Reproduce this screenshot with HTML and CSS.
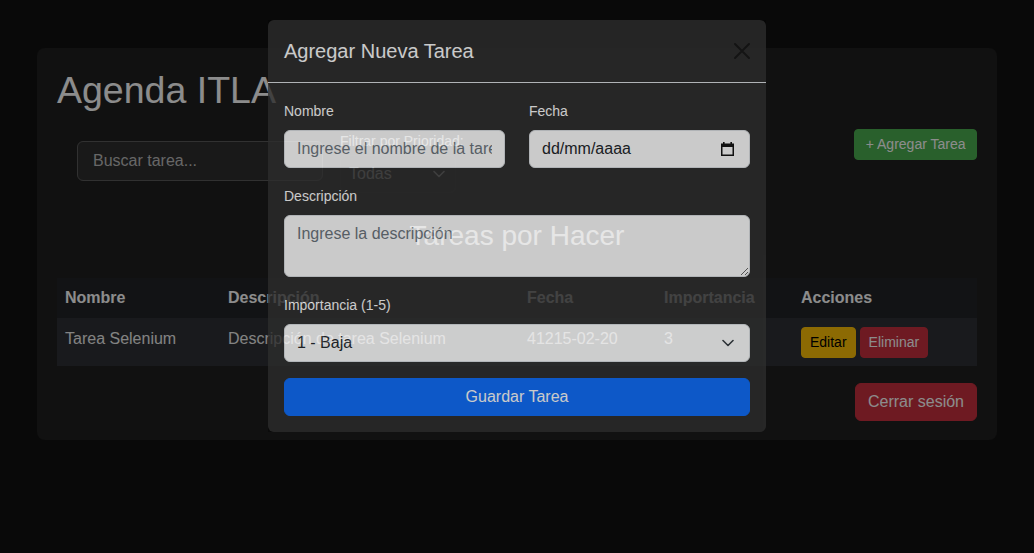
FILE: index.html
```html
<!DOCTYPE html>
<html lang="es">
<head>
<meta charset="utf-8">
<title>Agenda ITLA</title>
<link rel="stylesheet" href="styles.css">
</head>
<body>
  <main class="card">
    <h1 class="title">Agenda ITLA</h1>
    <div class="toolbar">
      <input class="search" type="text" placeholder="Buscar tarea...">
      <div class="filter">
        <label class="filter-label">Filtrar por Prioridad:</label>
        <div class="filter-select">
          <span>Todas</span>
          <svg class="filter-chev" width="12" height="8" viewBox="0 0 12 8"><path d="M1 1.5l5 5 5-5" fill="none" stroke="#dddddd" stroke-width="1.5" stroke-linecap="round" stroke-linejoin="round"/></svg>
        </div>
      </div>
      <button class="btn btn-sm btn-success add-btn">+ Agregar Tarea</button>
    </div>
    <h2 class="section-title">Tareas por Hacer</h2>
    <table class="tasks">
      <colgroup>
        <col class="c-name"><col class="c-desc"><col class="c-date"><col class="c-imp"><col class="c-act">
      </colgroup>
      <thead>
        <tr><th>Nombre</th><th>Descripción</th><th>Fecha</th><th>Importancia</th><th>Acciones</th></tr>
      </thead>
      <tbody>
        <tr>
          <td>Tarea Selenium</td>
          <td>Descripción de tarea Selenium</td>
          <td>41215-02-20</td>
          <td>3</td>
          <td class="actions"><div class="action-group"><button class="btn btn-sm btn-warning">Editar</button><button class="btn btn-sm btn-danger">Eliminar</button></div></td>
        </tr>
      </tbody>
    </table>
    <div class="logout-row"><button class="btn btn-danger">Cerrar sesión</button></div>
  </main>

  <div class="backdrop"></div>

  <div class="modal">
    <div class="modal-header">
      <h5 class="modal-title">Agregar Nueva Tarea</h5>
      <button class="btn-close" aria-label="Cerrar">
        <svg width="16" height="16" viewBox="0 0 16 16"><path d="M1 1L15 15M15 1L1 15" stroke="#000" stroke-width="2" stroke-linecap="round"/></svg>
      </button>
    </div>
    <div class="modal-body">
      <div class="form-row">
        <div class="field">
          <label class="form-label">Nombre</label>
          <input class="form-control" type="text" placeholder="Ingrese el nombre de la tarea">
        </div>
        <div class="field">
          <label class="form-label">Fecha</label>
          <div class="form-control date-control">
            <span>dd/mm/aaaa</span>
            <svg width="15" height="14" viewBox="0 0 15 14"><rect x="3" y="0" width="1.6" height="2.5" fill="#111"/><rect x="10.4" y="0" width="1.6" height="2.5" fill="#111"/><rect x="1.75" y="2.25" width="11.5" height="11" fill="none" stroke="#111" stroke-width="1.5"/><rect x="1" y="2" width="13" height="3" fill="#111"/></svg>
          </div>
        </div>
      </div>
      <div class="field mb">
        <label class="form-label">Descripción</label>
        <textarea class="form-control" rows="2" placeholder="Ingrese la descripción"></textarea>
      </div>
      <div class="field mb">
        <label class="form-label">Importancia (1-5)</label>
        <div class="select-wrap">
          <select class="form-control form-select">
            <option>1 - Baja</option>
            <option>2</option>
            <option>3</option>
            <option>4</option>
            <option>5 - Alta</option>
          </select>
          <svg class="select-chev" width="12" height="8" viewBox="0 0 12 8"><path d="M1 1.5l5 5 5-5" fill="none" stroke="#343a40" stroke-width="1.6" stroke-linecap="round" stroke-linejoin="round"/></svg>
        </div>
      </div>
      <button class="btn btn-primary btn-block">Guardar Tarea</button>
    </div>
  </div>
</body>
</html>
```

FILE: styles.css
```css
* { box-sizing: border-box; }

html, body {
  margin: 0;
  padding: 0;
}

body {
  background: #121212;
  color: #ffffff;
  font-family: "Liberation Sans", Arial, sans-serif;
  font-size: 16px;
  line-height: 1.5;
  height: 553px;
  overflow: hidden;
}

.card {
  width: 960px;
  margin: 48px auto 0;
  background: #1f1f1f;
  border-radius: 8px;
  padding: 20px 20px 19px;
}

.title {
  margin: 0;
  font-size: 37.5px;
  line-height: 45px;
  font-weight: normal;
  color: #fff;
}

.toolbar {
  display: flex;
  align-items: flex-start;
  margin-top: 16px;
  padding-left: 20px;
}

.search {
  width: 246px;
  height: 40px;
  margin-top: 12px;
  padding: 7px 15px;
  font: inherit;
  font-size: 16px;
  color: #fff;
  background: #2f2f2f;
  border: 1px solid #5a5a5a;
  border-radius: 6px;
}
.search::placeholder { color: #bcbcbc; }

.filter {
  margin-left: 17px;
  margin-top: 2px;
  display: flex;
  flex-direction: column;
}

.filter-label {
  font-size: 14px;
  line-height: 21px;
  color: #fff;
}

.filter-select {
  margin-top: 3px;
  width: 116px;
  height: 38px;
  display: flex;
  align-items: center;
  justify-content: space-between;
  padding: 0 10px 0 8px;
  font-size: 16px;
  color: #ddd;
  border: 1px solid #262626;
  border-radius: 6px;
}

.section-title {
  margin: 26px 0 0;
  font-size: 28px;
  line-height: 34px;
  font-weight: normal;
  text-align: center;
  color: #fff;
}

.tasks {
  width: 920px;
  margin-top: 25px;
  border-collapse: collapse;
  table-layout: fixed;
}
.c-name { width: 163px; }
.c-desc { width: 299px; }
.c-date { width: 137px; }
.c-imp { width: 137px; }
.c-act { width: 184px; }

.tasks th {
  background: #222427;
  text-align: left;
  font-weight: bold;
  padding: 8px;
  line-height: 24px;
  color: #fff;
}

.tasks td {
  background: #2f3135;
  padding: 9px 8px 7px;
  vertical-align: top;
  line-height: 24px;
  color: #eeeeee;
}

.tasks td.actions { padding: 9px 8px 8px; }

.action-group {
  display: flex;
  gap: 4px;
}

.btn {
  font-family: inherit;
  font-size: 16px;
  line-height: 24px;
  padding: 6px 12px;
  border: 1px solid transparent;
  border-radius: 6px;
  color: #fff;
  cursor: pointer;
}

.btn-sm {
  font-size: 14px;
  line-height: 21px;
  padding: 4px 8px;
  border-radius: 4px;
}

.toolbar .add-btn {
  margin-left: auto;
  padding-left: 10.5px;
  padding-right: 10.5px;
}

.btn-success { background: #4caf50; border-color: #4caf50; }
.btn-warning { background: #ffc107; border-color: #ffc107; color: #000; }
.btn-danger { background: #c9303e; border-color: #c9303e; }
.btn-primary { background: #0d6efd; border-color: #0d6efd; }

.logout-row {
  display: flex;
  justify-content: flex-end;
  margin-top: 17px;
}

.backdrop {
  position: fixed;
  inset: 0;
  background: rgba(0, 0, 0, 0.45);
}

.modal {
  position: fixed;
  top: 20px;
  left: 268px;
  width: 498px;
  background: #2e2e2e;
  border-radius: 6px;
  opacity: 0.78;
}

.modal-header {
  display: flex;
  align-items: center;
  justify-content: space-between;
  padding: 16px;
  border-bottom: 1px solid #dee2e6;
}

.modal-title {
  margin: 0;
  font-size: 20px;
  line-height: 30px;
  font-weight: normal;
  color: #fff;
}

.btn-close {
  width: 17px;
  height: 17px;
  padding: 0;
  border: 0;
  background: transparent;
  opacity: 0.5;
  display: flex;
  align-items: center;
  justify-content: center;
}

.modal-body { padding: 16px; }

.form-row {
  display: grid;
  grid-template-columns: 1fr 1fr;
  column-gap: 24px;
  margin-bottom: 16px;
}

.field { display: flex; flex-direction: column; }
.mb { margin-bottom: 16px; }

.form-label {
  font-size: 14px;
  line-height: 24px;
  margin-bottom: 7px;
  color: #fff;
}

.form-control {
  width: 100%;
  height: 38px;
  padding: 6px 12px;
  font-family: inherit;
  font-size: 16px;
  line-height: 24px;
  color: #212529;
  background: #fff;
  border: 1px solid #dee2e6;
  border-radius: 6px;
}
.form-control::placeholder { color: #6c757d; }

textarea.form-control {
  height: 62px;
  resize: vertical;
}

.date-control {
  display: flex;
  align-items: center;
  justify-content: space-between;
  padding-right: 14px;
}

.select-wrap { position: relative; }

.form-select {
  appearance: none;
  -webkit-appearance: none;
  padding-right: 36px;
}

.select-chev {
  position: absolute;
  right: 16px;
  top: 15px;
  pointer-events: none;
}

.btn-block {
  display: block;
  width: 100%;
  height: 38px;
}
```
